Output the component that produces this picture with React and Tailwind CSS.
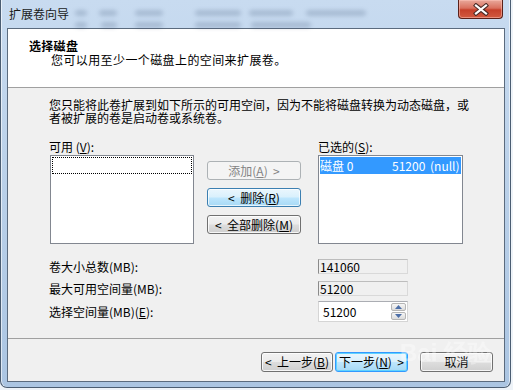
import React from 'react';

const btnStyles = {
    normal: 'border-[#707070] bg-[linear-gradient(#f2f2f2_0%,#ebebeb_48%,#dddddd_52%,#cfcfcf_100%)] text-black shadow-[inset_0_0_0_1px_rgba(255,255,255,0.8)]',
    hot: 'border-[#3c7fb1] bg-[linear-gradient(#eaf6fd_0%,#d9f0fc_48%,#bee6fd_52%,#a7d9f5_100%)] text-black shadow-[inset_0_0_0_1px_rgba(255,255,255,0.7)]',
    focus: 'border-[#3399ff] bg-[linear-gradient(#eaf6fd_0%,#d9f0fc_48%,#bee6fd_52%,#a7d9f5_100%)] text-black shadow-[inset_0_0_0_1px_#5fd3ff]',
    disabled: 'border-[#adb2b5] bg-[#f4f4f4] text-[#838383]',
};

const WinButton = ({ children, variant = 'normal', className = '' }) => (
    <div className={`flex items-center justify-center rounded-[3px] border leading-none whitespace-pre ${btnStyles[variant]} ${className}`}>
        <span>{children}</span>
    </div>
);

const Key = ({ k }) => (
    <span>(<span className="underline underline-offset-1">{k}</span>)</span>
);

const CloseGlyph = () => (
    <svg width="18" height="13" viewBox="0 0 18 13">
        <path d="M4 2.5 L14 10.5 M14 2.5 L4 10.5" stroke="#4a2a26" strokeWidth="4.2" strokeLinecap="square" />
        <path d="M4 2.5 L14 10.5 M14 2.5 L4 10.5" stroke="#ffffff" strokeWidth="2.2" strokeLinecap="square" />
    </svg>
);

const SpinArrow = ({ up }) => (
    <div className="flex-1 flex items-center justify-center border border-[#b5b5b5] rounded-[2px] bg-[linear-gradient(#f6f6f6,#dcdcdc)]">
        <svg width="7" height="4" viewBox="0 0 7 4">
            <path d={up ? 'M0 4 L3.5 0 L7 4 Z' : 'M0 0 L3.5 4 L7 0 Z'} fill="#4d6fa8" />
        </svg>
    </div>
);

const ReadOnlyField = ({ value }) => (
    <div className="w-[90px] h-[15px] flex items-center pl-[1px] bg-[#f0f0f0] border border-[#d9d9d9] border-l-[#8a8a8a] border-t-[#bdbdbd] text-[12px] leading-none">
        {value}
    </div>
);

const blobs = [
    'left-[74px] top-[10px] w-[12px]',
    'left-[98px] top-[10px] w-[18px]',
    'left-[134px] top-[10px] w-[28px]',
    'left-[194px] top-[10px] w-[46px]',
    'left-[248px] top-[10px] w-[44px]',
    'left-[305px] top-[10px] w-[60px]',
    'left-[74px] top-[22px] w-[12px]',
    'left-[100px] top-[22px] w-[16px]',
    'left-[134px] top-[22px] w-[28px]',
    'left-[194px] top-[22px] w-[46px]',
    'left-[250px] top-[22px] w-[60px]',
];

export default function App() {
    return (
        <div className="w-[513px] h-[390px] overflow-hidden bg-[#eef3f8] font-['Noto_Sans_CJK_SC',sans-serif] text-[12px] text-black">
            <div className="w-[511px] h-[388px] flex flex-col rounded-b-[7px] border border-t-0 border-[#4b5d72] bg-[linear-gradient(to_bottom,#c8dbf0,#bcd2ea_40%,#abc5e2)] shadow-[inset_1px_0_0_rgba(255,255,255,0.6),inset_-1px_0_0_rgba(255,255,255,0.6)]">
                {/* title bar */}
                <div className="relative h-[28px] flex items-start justify-between">
                    {blobs.map((b) => (
                        <div key={b} className={`absolute h-[6px] rounded-full bg-[#2d4466] opacity-20 blur-[2px] ${b}`} />
                    ))}
                    <div className="relative pl-[8px] pt-[6px] text-[12px] leading-[16px] text-[#1a1a1a]">扩展卷向导</div>
                    <div className="relative mr-[7px] w-[45px] h-[19px] flex items-center justify-center rounded-b-[4px] border border-t-0 border-[#5a2019] bg-[linear-gradient(#e9a99b_0%,#d9705e_45%,#c6402a_55%,#d25a40_100%)] shadow-[inset_0_0_0_1px_rgba(255,200,190,0.5)]">
                        <CloseGlyph />
                    </div>
                </div>

                {/* client area */}
                <div className="ml-[6px] w-[498px] h-[354px] flex flex-col border border-[#5b6b7e] bg-[#f0f0f0]">
                    {/* header */}
                    <div className="h-[58px] bg-white pt-[10px] leading-[14px]">
                        <div className="pl-[21px] font-bold tracking-[0.3px]">选择磁盘</div>
                        <div className="pl-[43px] tracking-[0.4px]">您可以用至少一个磁盘上的空间来扩展卷。</div>
                    </div>
                    <div className="h-px bg-[#a0a0a0]" />

                    {/* body */}
                    <div className="h-[250px] pl-[41px] pt-[10px]">
                        <p className="leading-[13px] whitespace-nowrap">
                            您只能将此卷扩展到如下所示的可用空间，因为不能将磁盘转换为动态磁盘，或
                            <br />
                            者被扩展的卷是启动卷或系统卷。
                        </p>

                        <div className="mt-[17px] flex">
                            <div className="w-[145px]">
                                <div className="h-[14px] leading-[12px]">可用 <Key k="V" />:</div>
                                <div className="ml-[1px] w-[144px] h-[89px] bg-white border border-[#828790] p-px">
                                    <div className="h-[17px] border border-dotted border-black" />
                                </div>
                            </div>

                            <div className="ml-[13px] pt-[20px] flex flex-col gap-[8px]">
                                <WinButton variant="disabled" className="w-[94px] h-[19px]">添加<Key k="A" />{'  >'}</WinButton>
                                <WinButton variant="hot" className="w-[94px] h-[19px]">{'<  '}删除<Key k="R" /></WinButton>
                                <WinButton className="w-[94px] h-[19px]">{'<  '}全部删除<Key k="M" /></WinButton>
                            </div>

                            <div className="ml-[17px] w-[145px]">
                                <div className="h-[14px] leading-[12px]">已选的<Key k="S" />:</div>
                                <div className="w-[145px] h-[89px] bg-white border border-[#828790] p-px">
                                    <div className="h-[17px] flex items-center bg-[#3399ff] text-white whitespace-nowrap overflow-hidden leading-none">
                                        <span className="w-[72px]">磁盘 0</span>
                                        <span className="w-[38px]">51200</span>
                                        <span>(null)</span>
                                    </div>
                                </div>
                            </div>
                        </div>

                        <div className="mt-[15px] flex flex-col">
                            <div className="flex items-center h-[15px]">
                                <div className="w-[269px]">卷大小总数(MB):</div>
                                <ReadOnlyField value="141060" />
                            </div>
                            <div className="mt-[7px] flex items-center h-[15px]">
                                <div className="w-[269px]">最大可用空间量(MB):</div>
                                <ReadOnlyField value="51200" />
                            </div>
                            <div className="mt-[5px] flex items-center h-[21px]">
                                <div className="w-[269px]">选择空间量(MB)<Key k="E" />:</div>
                                <div className="w-[90px] h-[21px] flex bg-white border border-[#d5d5d5] border-t-[#abadb3]">
                                    <div className="flex-1 flex items-center pl-[4px] leading-none">51200</div>
                                    <div className="w-[17px] flex flex-col gap-px p-px">
                                        <SpinArrow up />
                                        <SpinArrow />
                                    </div>
                                </div>
                            </div>
                        </div>
                    </div>
                    <div className="h-px bg-[#a0a0a0]" />

                    {/* footer */}
                    <div className="relative flex-1 flex justify-end pt-[13px] pr-[11px]">
                        <WinButton className="w-[72px] h-[20px]">{'<  '}上一步<Key k="B" /></WinButton>
                        <WinButton variant="focus" className="ml-[2px] w-[73px] h-[20px]">下一步<Key k="N" />{'  >'}</WinButton>
                        <WinButton className="ml-[12px] w-[73px] h-[20px]">取消</WinButton>
                        <div className="absolute left-[392px] top-[2px] font-['Liberation_Sans',sans-serif] font-bold text-[24px] leading-none text-white opacity-35 pointer-events-none">
                            Bai 经验
                        </div>
                    </div>
                </div>
            </div>
        </div>
    );
}
